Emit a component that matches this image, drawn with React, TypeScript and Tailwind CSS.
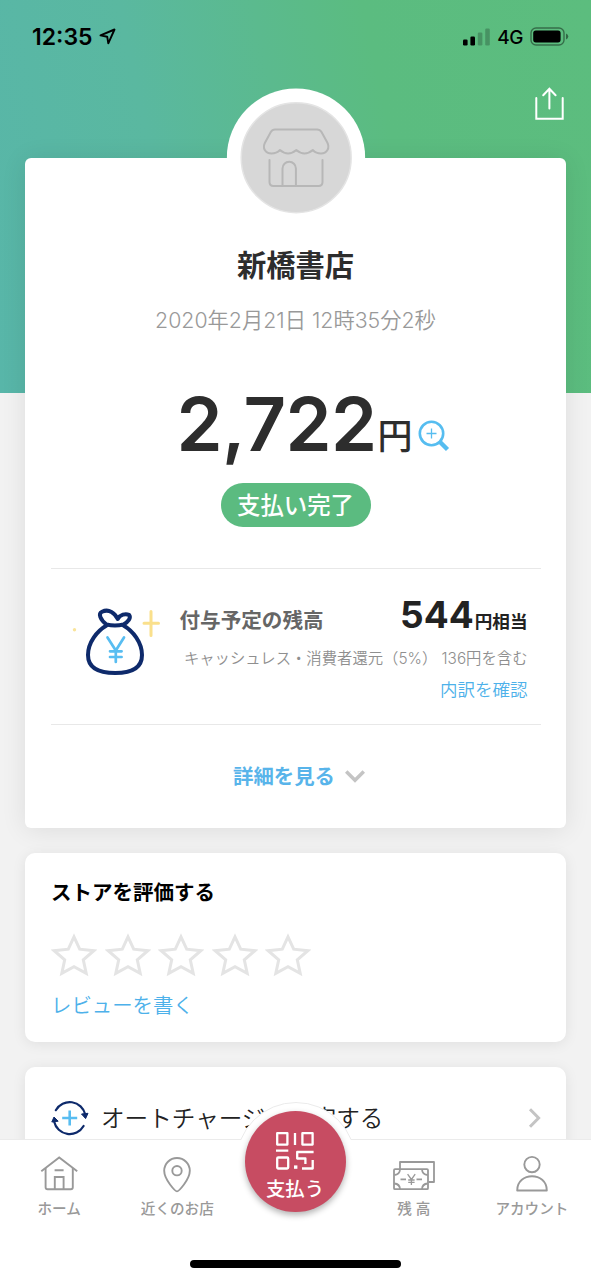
import type { ReactNode } from "react";

function StatusBar() {
    return (
        <div className="flex h-[73px] items-center justify-between pl-8 pr-[22px] text-black">
            <div className="flex items-center gap-1.5">
                <span className="pt-px text-[23px] font-semibold leading-none">12:35</span>
                <svg width="17" height="17" viewBox="0 0 17 17" fill="none" stroke="currentColor" strokeWidth="1.9" strokeLinejoin="round">
                    <path d="M15.5 1.5 L1.5 7.4 L8.2 8.7 L9.3 15.4 Z" />
                </svg>
            </div>
            <div className="flex items-center gap-[7px]">
                <svg width="27" height="18" viewBox="0 0 27 18">
                    <rect x="0" y="11.5" width="4.6" height="6" rx="1.2" />
                    <rect x="7.4" y="8.5" width="4.6" height="9" rx="1.2" />
                    <rect x="14.8" y="4.5" width="4.6" height="13" rx="1.2" opacity=".22" />
                    <rect x="22.2" y="0.5" width="4.6" height="17" rx="1.2" opacity=".22" />
                </svg>
                <span className="pt-px text-[19px] font-medium leading-none tracking-[-0.4px]">4G</span>
                <svg width="39" height="19" viewBox="0 0 39 19">
                    <rect x="1" y="1" width="33" height="17" rx="5" fill="none" stroke="#000" strokeWidth="1.4" opacity=".42" />
                    <rect x="3.2" y="3.4" width="27.4" height="12" rx="2.6" />
                    <path d="M36 6.5 Q38.3 7.5 38.3 9.5 T36 12.5 Z" opacity=".45" />
                </svg>
            </div>
        </div>
    );
}

function StoreAvatar() {
    return (
        <svg className="absolute -top-[70px] left-1/2 -translate-x-1/2" width="139" height="139" viewBox="0 0 139 139" fill="none">
            <circle cx="69.5" cy="69.7" r="69.2" fill="#fff" />
            <circle cx="69.7" cy="69.7" r="55" fill="#d7d7d7" stroke="#e4e4e4" strokeWidth="1.5" />
            <g stroke="#b7b7b7" strokeWidth="2" strokeLinecap="round" strokeLinejoin="round">
                <path d="M48.5 41.5H90.5Q93.5 41.5 95 44L100.8 54.5C103.6 60 100.5 65.5 94.5 65.5Q89.5 65.5 86.3 62Q78 69 69.8 62Q61.6 69 53.5 62Q50 65.5 45 65.5C38.7 65.5 35.6 60 38.6 54.5L44.3 44Q45.7 41.5 48.5 41.5Z" />
                <path d="M43 72V94Q43 98 47 98H92Q96 98 96 94V72" />
                <path d="M56 98V80.5A6.7 6.7 0 0 1 69.4 80.5V98" />
            </g>
        </svg>
    );
}

function MoneyBag() {
    return (
        <svg width="90" height="76" viewBox="0 0 90 76" fill="none" strokeLinecap="round" strokeLinejoin="round">
            <g stroke="#0e2a6b" strokeWidth="4">
                <path d="M34.5 21.5C25 27 16 38.5 16 51C16 63.5 26 69 43.3 69C60 69 70 63.5 70 51C70 38.5 61 27 51.5 21.5" />
                <path d="M34.5 20.5C28 15.5 26 9.5 30 7.7C37 4.5 43 9 45.7 15C48 10.5 53.5 9.3 57 10.8C59.5 14 56 18 51.5 20.5Q43 22.5 34.5 20.5Z" />
            </g>
            <path d="M35.5 33.5L43.8 46.5L52 33.5M43.8 46.5V58M38 47.3H49.6M38 53H49.6" stroke="#58bdf1" strokeWidth="2.7" />
            <path d="M79 7.5V31.5M72 19.3H86.5" stroke="#fae08c" strokeWidth="3" />
            <circle cx="2.5" cy="25.7" r="1.7" fill="#f9e49b" />
        </svg>
    );
}

function NavItem({ label, children }: { label: string; children: ReactNode }) {
    return (
        <button className="flex flex-1 flex-col items-center pt-[15px] text-[#999]">
            <span className="flex h-[38px] items-start">{children}</span>
            <span className="mt-1.5 whitespace-nowrap text-[14.6px] font-medium leading-5">{label}</span>
        </button>
    );
}

export default function App() {
    return (
        <div
            lang="ja"
            className="flex h-[1280px] w-[591px] flex-col overflow-hidden bg-[#f2f2f2] font-['Inter','Noto_Sans_CJK_JP',sans-serif]"
        >
            {/* Header */}
            <header className="h-[393px] shrink-0 bg-[linear-gradient(78deg,#58b6a9_0%,#5ab8a0_30%,#5bba8e_50%,#5bbc80_66%,#5cbd7e_100%)]">
                <StatusBar />
                <div className="flex justify-end pr-[26px] pt-[13px]">
                    <svg width="31" height="35" viewBox="0 0 31 35" fill="none" stroke="#fff" strokeWidth="2" strokeLinecap="round">
                        <path d="M2.3 12V32.8H28.7V12" />
                        <path d="M15.4 22.5V3M9.2 9.2L15.4 2.7L21.6 9.2" />
                    </svg>
                </div>
            </header>

            <main className="-mt-[235px] flex h-[981px] shrink-0 flex-col gap-[25px] px-[25px]">
                {/* Payment */}
                <section className="relative flex h-[670px] shrink-0 flex-col items-center rounded-md bg-white px-[26px] pt-[87px] text-[#2d2d2d] shadow-[0_2px_26px_rgba(0,0,0,0.09)]">
                    <StoreAvatar />
                    <h1 className="pt-px text-[29.3px] font-bold leading-10">新橋書店</h1>
                    <p className="mt-[19px] whitespace-nowrap text-[21.3px] font-[350] leading-[30px] text-[#999]">2020年2月21日 12時35分2秒</p>

                    <div className="mt-[49px] flex h-20 items-baseline pl-9">
                        <span className="text-[74px] font-semibold leading-[80px] tracking-[-0.6px]">2,722</span>
                        <span className="ml-px -translate-y-0.5 text-[35px] font-medium leading-10">円</span>
                        <svg className="ml-1.5 translate-y-px" width="32" height="32" viewBox="0 0 32 32" fill="none" stroke="#56bdf0">
                            <circle cx="13.5" cy="13.5" r="11.7" strokeWidth="2.6" />
                            <path d="M13.5 8.5V18.5M8.5 13.5H18.5" strokeWidth="1.3" />
                            <path d="M22 22L29.5 29.5" strokeWidth="4.4" />
                        </svg>
                    </div>

                    <div className="mt-[19px] flex h-11 w-[150px] shrink-0 items-center justify-center rounded-full bg-[#5bbb80] pt-0.5 text-[23.4px] font-medium text-white">
                        支払い完了
                    </div>

                    <div className="mt-[41px] flex h-[157px] w-[490px] shrink-0 border-y border-[#e8e8e8] pl-[21px] pr-[13px] pt-[35px]">
                        <MoneyBag />
                        <div className="-mt-1.5 ml-[18px] flex flex-1 flex-col">
                            <div className="flex h-[34px] items-baseline justify-between">
                                <span className="text-[20.6px] font-bold leading-[34px] text-[#666]">付与予定の残高</span>
                                <span className="flex items-baseline font-bold text-[#222]">
                                    <span className="text-[37px] leading-[34px]">544</span>
                                    <span className="ml-px text-[17.6px] leading-[34px]">円相当</span>
                                </span>
                            </div>
                            <p className="-ml-1 mt-[17px] whitespace-nowrap text-right text-[15.35px] font-[350] leading-5 text-[#8f8f8f]">
                                キャッシュレス・消費者還元（5%） 136円を含む
                            </p>
                            <a className="mt-[9px] text-right text-[17.5px] font-[350] leading-6 text-[#4db1ea]">内訳を確認</a>
                        </div>
                    </div>

                    <button className="flex h-[103px] items-center gap-2.5 pl-[7px] text-[20.4px] font-bold text-[#58b4ea]">
                        <span className="pt-0.5">詳細を見る</span>
                        <svg width="20" height="13" viewBox="0 0 20 13" fill="none" stroke="#c4c4c4" strokeWidth="3.6">
                            <path d="M1.2 1.5L10 10.3L18.8 1.5" />
                        </svg>
                    </button>
                </section>

                {/* Store rating */}
                <section className="h-[189px] shrink-0 rounded-[10px] bg-white pl-[26px] pt-[25px] shadow-[0_2px_14px_rgba(0,0,0,0.08)]">
                    <h2 className="text-[20.5px] font-bold leading-[30px] text-black">ストアを評価する</h2>
                    <div className="mt-[25px] flex gap-[7.6px]">
                        {[1, 2, 3, 4, 5].map((n) => (
                            <svg key={n} width="46" height="44" viewBox="0 0 46 44" fill="none" stroke="#e4e4e4" strokeWidth="3">
                                <path d="M23 3.9L28.7 16.2L42.8 17.7L32.3 26.9L35.2 40.4L23 33.6L10.8 40.4L13.7 26.9L3.2 17.7L17.3 16.2Z" />
                            </svg>
                        ))}
                    </div>
                    <a className="mt-3.5 block text-[20.4px] font-[350] leading-[30px] text-[#4db1ea]">レビューを書く</a>
                </section>

                {/* Auto charge */}
                <section className="flex h-[101px] shrink-0 items-center rounded-[10px] bg-white pl-[26px] pr-6 shadow-[0_2px_14px_rgba(0,0,0,0.08)]">
                    <svg width="38" height="36" viewBox="0 0 38 36" fill="none">
                        <g stroke="#0e2a6b" strokeWidth="2.2" strokeLinecap="round">
                            <path d="M4.8 10.2A16 16 0 0 1 34.3 14.5" />
                            <path d="M32.6 26A16 16 0 0 1 3.1 21.5" />
                        </g>
                        <path d="M30.5 14L37 13.3L34.6 18.6ZM.8 22L7.2 21.2L3 17Z" fill="#0e2a6b" stroke="#0e2a6b" strokeLinejoin="round" />
                        <path d="M18.7 10.5V25.5M11.2 18H26.2" stroke="#58bdf1" strokeWidth="2.6" />
                    </svg>
                    <span className="ml-3 flex-1 pt-0.5 text-[23.6px] font-[350] text-[#222]">オートチャージを設定する</span>
                    <svg width="14" height="20" viewBox="0 0 14 20" fill="none" stroke="#c4c4c4" strokeWidth="3">
                        <path d="M2 1.3L10.6 10L2 18.7" />
                    </svg>
                </section>
            </main>

            {/* Bottom navigation */}
            <footer className="relative flex flex-1 flex-col border-t border-[#ebebeb] bg-white">
                <nav className="flex h-[120px]">
                    <NavItem label="ホーム">
                        <svg width="38" height="36" viewBox="0 0 38 36" fill="none" stroke="currentColor" strokeWidth="1.9">
                            <path d="M1.3 16.2L19.2 2.5L37.2 16.2" />
                            <path d="M5.6 13V32.3Q5.6 34.3 7.6 34.3H30.8Q32.8 34.3 32.8 32.3V13" />
                            <path d="M14.8 34V22H23.6V34M14.6 15.3H23.6" />
                        </svg>
                    </NavItem>
                    <NavItem label="近くのお店">
                        <svg width="30" height="38" viewBox="0 0 30 38" fill="none" stroke="currentColor" strokeWidth="1.9">
                            <path d="M15 36.4C13.5 36.4 2.2 24.8 2.2 15.8A12.8 12.8 0 0 1 27.8 15.8C27.8 24.8 16.5 36.4 15 36.4Z" />
                            <circle cx="15" cy="15.7" r="4.7" />
                        </svg>
                    </NavItem>
                    <div className="flex-1" />
                    <NavItem label="残 高">
                        <svg width="44" height="38" viewBox="0 0 44 38" fill="none" stroke="currentColor" strokeWidth="1.8" strokeLinejoin="round">
                            <rect x="2" y="14.2" width="34" height="20" rx="1" />
                            <path d="M8 14V7H42V27H36.5" />
                            <path d="M8 14.5Q7.7 19.5 2.3 20M30 14.5Q30.3 19.5 35.7 20M2.3 28.5Q7.7 29 8 34M35.7 28.5Q30.3 29 30 34" />
                            <path d="M8.5 24.3H14M24.5 24.3H30" />
                            <path d="M15.6 19.2L19.4 24.5L23.2 19.2M19.4 24.5V30M16.2 25H22.6M16.2 27.4H22.6" strokeWidth="1.3" />
                        </svg>
                    </NavItem>
                    <NavItem label="アカウント">
                        <svg width="34" height="38" viewBox="0 0 34 38" fill="none" stroke="currentColor" strokeWidth="1.9" strokeLinejoin="round">
                            <circle cx="17" cy="9.6" r="7.7" />
                            <path d="M2.2 35.5C2.2 16.5 31.8 16.5 31.8 35.5Z" />
                        </svg>
                    </NavItem>
                </nav>
                <div className="mx-auto h-2 w-[211px] rounded-full bg-black" />

                {/* Pay button sits over the bar */}
                <div className="absolute -top-[38px] left-1/2 size-[120px] -translate-x-1/2">
                    <div className="absolute inset-x-0 top-0 h-[38px] overflow-hidden">
                        <div className="size-[120px] rounded-full border border-[#ebebeb] bg-white" />
                    </div>
                    <button className="absolute left-[9px] top-[9px] flex size-[101px] flex-col items-center rounded-full bg-[#c74c62] pt-[21px] text-white shadow-[0_3px_6px_rgba(0,0,0,0.3)]">
                        <svg width="38" height="38" viewBox="0 0 38 38" fill="none" stroke="#fff" strokeWidth="2.3" strokeLinejoin="round">
                            <rect x="1.2" y="1.2" width="10.2" height="11.4" />
                            <path d="M19 1V13M0 18.7H12.3" />
                            <rect x="26.4" y="1.2" width="10.2" height="11.4" />
                            <rect x="1.2" y="25.5" width="11" height="11" rx="1" />
                            <path d="M37.6 20H21.2V26.5H29.4V32M36.7 28V36.5H26" />
                            <rect x="18" y="33.4" width="3.4" height="3.4" fill="#fff" stroke="none" />
                        </svg>
                        <span className="mt-[7px] text-[19.4px] font-medium leading-6">支払う</span>
                    </button>
                </div>
            </footer>
        </div>
    );
}
